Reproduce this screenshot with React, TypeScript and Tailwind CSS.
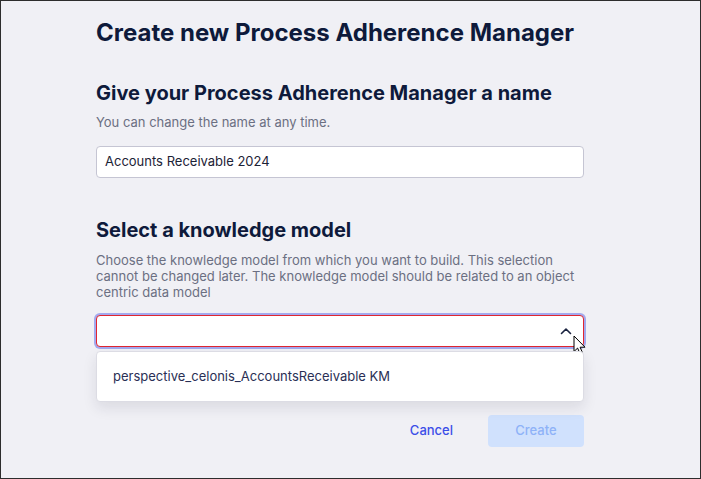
import React from 'react';

const Chevron: React.FC = () => (
  <svg width="12" height="8" viewBox="0 0 12 8" fill="none" className="text-[#1a2340]">
    <path d="M1.5 6.5 L6 2 L10.5 6.5" stroke="currentColor" strokeWidth="1.6" strokeLinecap="round" strokeLinejoin="round" />
  </svg>
);

const Cursor: React.FC = () => (
  <svg width="14" height="21" viewBox="0 0 14 21" className="absolute left-[477px] top-[20px]">
    <path
      d="M1 1 L1 16.5 L4.6 13.1 L7.2 19 L9.6 18 L7.1 12.2 L12 12.2 Z"
      fill="#ffffff"
      stroke="#000000"
      strokeWidth="1"
      strokeLinejoin="round"
    />
  </svg>
);

const App: React.FC = () => {
  return (
    <div className="w-[701px] h-[479px] border border-[#2d2d2d] bg-[#f0f0f5] font-['Inter',sans-serif] overflow-hidden">
      <div className="ml-[95px] w-[488px] pt-[16px] flex flex-col">
        <h1 className="text-[24px] leading-[32px] font-bold text-[#0e1a3b]">
          Create new Process Adherence Manager
        </h1>

        <h2 className="mt-[30px] text-[20px] leading-[28px] font-bold text-[#0e1a3b]">
          Give your Process Adherence Manager a name
        </h2>
        <p className="mt-[5px] text-[13px] leading-[20px] text-[#6b6f82]">
          You can change the name at any time.
        </p>
        <div className="mt-[14px] h-[32px] bg-white border border-[#c5c5d3] rounded-[4px] flex items-center px-[8px] text-[13px] text-[#1c2236]">
          Accounts Receivable 2024
        </div>

        <h2 className="mt-[38px] text-[20px] leading-[28px] font-bold text-[#0e1a3b]">
          Select a knowledge model
        </h2>
        <p className="mt-[8px] text-[13px] leading-[16px] text-[#6b6f82]">
          Choose the knowledge model from which you want to build. This selection cannot be changed later. The knowledge model should be related to an object centric data model
        </p>

        <div className="relative mt-[15px]">
          <div className="h-[32px] bg-white border border-[#e0262f] rounded-[4px] shadow-[0_0_0_2px_#a3a9ee] flex items-center justify-end pr-[11px]">
            <Chevron />
          </div>
          <Cursor />
          <div className="absolute left-0 right-0 top-[36px] h-[51px] bg-white border border-[#dcdce4] rounded-[4px] shadow-[0_6px_14px_rgba(30,30,60,0.10)] flex items-center px-[16px] text-[13px] text-[#2a2f55]">
            perspective_celonis_AccountsReceivable KM
          </div>
        </div>

        <div className="mt-[68px] flex justify-end items-center gap-[19px]">
          <button className="h-[32px] px-[16px] text-[13px] font-medium text-[#3b4ee8]">Cancel</button>
          <button className="h-[32px] w-[96px] rounded-[4px] bg-[#d0e1fd] text-[13px] font-medium text-[#8eb2f8]">
            Create
          </button>
        </div>
      </div>
    </div>
  );
};

export default App;
